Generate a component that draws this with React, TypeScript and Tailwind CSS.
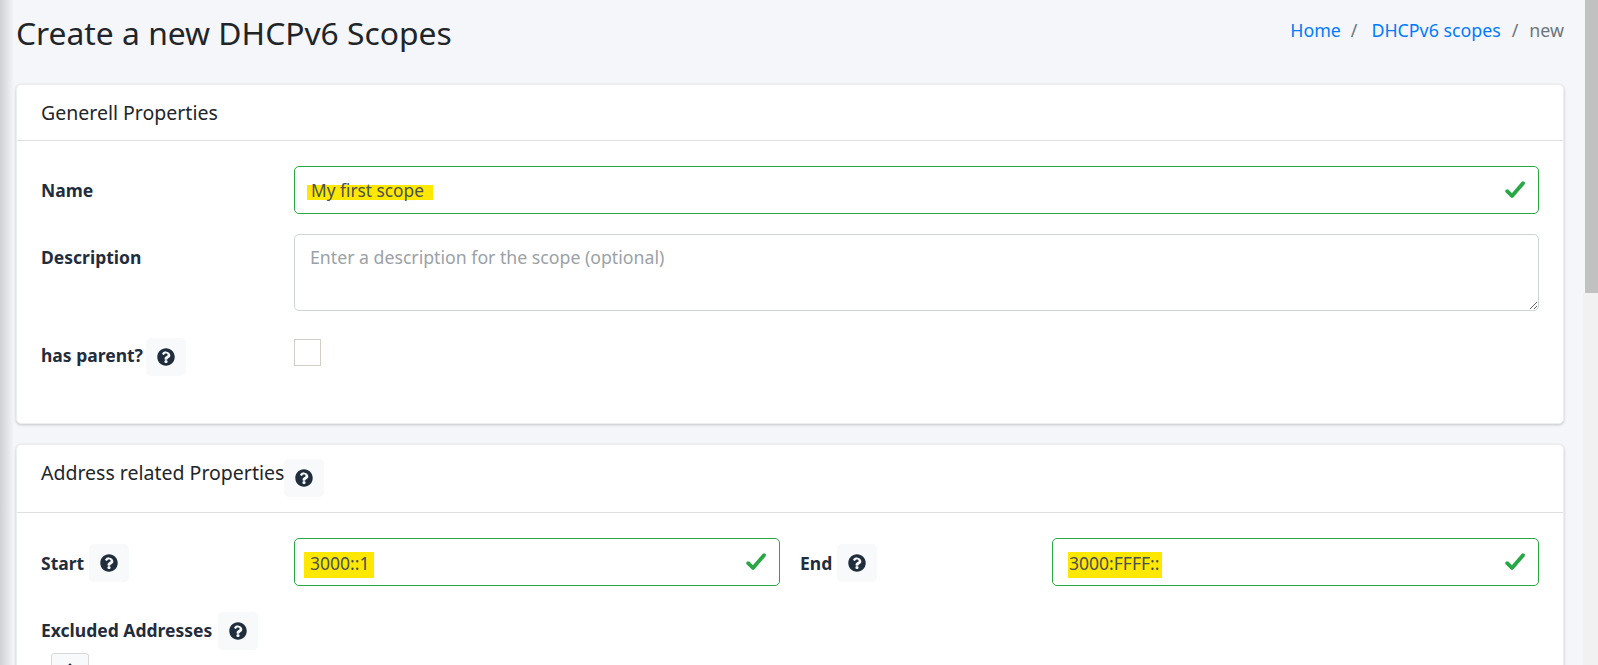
import { ReactNode } from 'react';

function HelpButton() {
  return (
    <span className="inline-flex shrink-0 items-center justify-center w-[40px] h-[38px] rounded-[5px] bg-[#f8f9fa]">
      <svg viewBox="0 0 512 512" className="w-[18px] h-[18px] fill-[#1f2d3d]">
        <path d="M504 256c0 137-111 248-248 248S8 393 8 256C8 119 119 8 256 8s248 111 248 248zM262.700 90c-54.500 0-89.300 23-116.500 63.800-3.500 5.300-2.400 12.400 2.700 16.300l34.700 26.300c5.200 3.900 12.600 3 16.700-2.100 17.900-22.700 30.100-35.800 57.300-35.800 20.400 0 45.700 13.100 45.700 33 0 15-12.400 22.700-32.600 34-23.600 13.200-54.800 29.700-54.800 70.900V320c0 6.600 5.400 12 12 12h56c6.600 0 12-5.400 12-12v-1.300c0-28.600 83.500-29.800 83.500-107.200 0-58.300-60.500-102.500-116.700-102.500zM256 338c-25.400 0-46 20.600-46 46s20.600 46 46 46 46-20.600 46-46-20.600-46-46-46z" />
      </svg>
    </span>
  );
}

function Check() {
  return (
    <svg viewBox="0 0 20 18" className="w-[20px] h-[18px] fill-none stroke-[#28a745] stroke-[3.8]" strokeLinecap="round" strokeLinejoin="round">
      <path d="M2.200 10.200L7 15L18 2.200" />
    </svg>
  );
}

function ValidInput({ value, markClass, className }: { value: string; markClass: string; className: string }) {
  return (
    <div className={`flex items-center justify-between h-[48px] border border-[#28a745] rounded-[5px] bg-white pr-[13px] ${className}`}>
      <span className={`block bg-[#ffe800] text-[#495057] whitespace-nowrap ${markClass}`}>{value}</span>
      <Check />
    </div>
  );
}

function Card({ header, headerClass, children, bodyClass }: { header: ReactNode; headerClass: string; children: ReactNode; bodyClass: string }) {
  return (
    <section className="bg-white rounded-[5px] border border-[#eceef0] shadow-[0_1px_3px_rgba(0,0,0,0.2)] mb-[20px]">
      <div className={`flex pl-[24px] border-b border-[#dfdfdf] text-[19.5px] leading-[27px] text-[#212529] ${headerClass}`}>{header}</div>
      <div className={`pl-[24px] pr-[24px] pt-[25px] ${bodyClass}`}>{children}</div>
    </section>
  );
}

export default function App() {
  return (
    <div className='flex h-screen overflow-hidden bg-[#f4f6f9] text-[#1f2d3d] font-["Noto_Sans",sans-serif]'>
      {/* shadow of the collapsed sidebar */}
      <div className="w-[14px] shrink-0 bg-gradient-to-r from-[#cfd1d5] to-[#f4f6f9]" />

      <main className="flex-1 min-w-0 pl-[2px] pr-[19px]">
        <div className="flex justify-between h-[84px]">
          <h1 className="mt-[9px] text-[31.8px] leading-[48px] text-[#212529] whitespace-nowrap">Create a new DHCPv6 Scopes</h1>
          <nav className="flex mt-[18px] text-[17.8px] leading-[24px] whitespace-nowrap">
            <a className="text-[#007bff]">Home</a>
            <span className="ml-[10px] mr-[14px] text-[#6c757d]">/</span>
            <a className="text-[#007bff]">DHCPv6 scopes</a>
            <span className="mx-[11px] text-[#6c757d]">/</span>
            <span className="text-[#6c757d]">new</span>
          </nav>
        </div>

        <Card header="Generell Properties" headerClass="items-center h-[56px]" bodyClass="h-[282px]">
          <div className="flex items-center h-[48px]">
            <label className="w-[253px] shrink-0 font-bold text-[17.500px]">Name</label>
            <ValidInput value="My first scope" markClass="ml-[12px] mt-[5px] h-[15px] text-[17.3px] leading-[11px] pl-[4px] pr-[9px]" className="flex-1" />
          </div>
          <div className="flex mt-[20px] h-[77px]">
            <label className="w-[253px] shrink-0 mt-[10px] font-bold text-[17.500px] leading-[26px]">Description</label>
            <textarea
              readOnly
              placeholder="Enter a description for the scope (optional)"
              className="flex-1 border border-[#ced4da] rounded-[5px] px-[15px] py-[9px] text-[17.7px] leading-[26px] placeholder:text-[#9aa1a7] outline-none"
            />
          </div>
          <div className="flex mt-[27px]">
            <div className="w-[253px] shrink-0 flex items-center gap-[3px]">
              <label className="font-bold text-[17.500px] mb-[3px]">has parent?</label>
              <HelpButton />
            </div>
            <span className="mt-[1px] w-[27px] h-[27px] border border-[#d3cfc8] bg-white" />
          </div>
        </Card>

        <Card
          header={
            <>
              <span>Address related Properties</span>
              <HelpButton />
            </>
          }
          headerClass="items-start h-[68px] pt-[14px]"
          bodyClass="h-[300px]"
        >
          <div className="flex items-center h-[48px]">
            <div className="w-[253px] shrink-0 mt-[2px] flex items-center gap-[5px]">
              <label className="font-bold text-[17.500px]">Start</label>
              <HelpButton />
            </div>
            <ValidInput value="3000::1" markClass="ml-[9px] mt-[6px] h-[26px] text-[17.500px] leading-[22px] pl-[6px] pr-[5px]" className="w-[486px]" />
            <div className="w-[272px] shrink-0 mt-[2px] pl-[20px] flex items-center gap-[5px]">
              <label className="font-bold text-[17.500px]">End</label>
              <HelpButton />
            </div>
            <ValidInput value="3000:FFFF::" markClass="ml-[15px] mt-[6px] h-[26px] text-[17.500px] leading-[22px] pl-[1px] pr-[3px]" className="flex-1" />
          </div>
          <div className="flex items-center gap-[6px] mt-[26px]">
            <label className="font-bold text-[17.500px] mb-[2px]">Excluded Addresses</label>
            <HelpButton />
          </div>
          <button className="flex items-center justify-center ml-[10px] mt-[3px] w-[38px] h-[38px] border border-[#d8d8d8] rounded-[3px] bg-[#f8f9fa]">
            <svg viewBox="0 0 18 18" className="w-[18px] h-[18px] fill-none stroke-[#1f2d3d] stroke-[3]" strokeLinecap="round">
              <path d="M9 2v14M2 9h14" />
            </svg>
          </button>
        </Card>
      </main>

      {/* browser scrollbar */}
      <div className="w-[15px] shrink-0 bg-[#f1f1f1]">
        <div className="h-[293px] bg-[#c1c1c1] border-l-2 border-[#f4f6f9]" />
      </div>
    </div>
  );
}
